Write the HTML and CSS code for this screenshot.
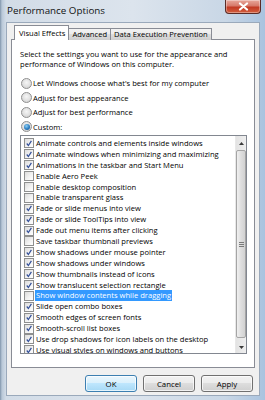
FILE: index.html
```html
<!DOCTYPE html>
<html lang="en">
<head>
    <meta charset="UTF-8">
    <title>Performance Options</title>
    <link rel="stylesheet" href="styles.css">
</head>
<body>
    <div class="window">
        <div class="titlebar">
            <span class="title">Performance Options</span>
            <button class="close-button">
                <svg width="11" height="9" viewBox="0 0 11 9"><path d="M2 1.5 L9 7.5 M9 1.5 L2 7.5" stroke="#fff" stroke-width="2.2" stroke-linecap="round"/></svg>
            </button>
        </div>

        <div class="client">
            <div class="tabs">
                <div class="tab selected">Visual Effects</div>
                <div class="tab">Advanced</div>
                <div class="tab">Data Execution Prevention</div>
            </div>

            <div class="panel">
                <p class="intro">Select the settings you want to use for the appearance and<br>performance of Windows on this computer.</p>

                <div class="radios">
                    <label class="radio"><span class="radio-dot"></span>Let Windows choose what's best for my computer</label>
                    <label class="radio"><span class="radio-dot"></span>Adjust for best appearance</label>
                    <label class="radio"><span class="radio-dot"></span>Adjust for best performance</label>
                    <label class="radio"><span class="radio-dot checked"></span>Custom:</label>
                </div>

                <div class="list">
                    <div class="items" id="items"></div>
                    <div class="scrollbar">
                        <div class="arrow">
                            <svg width="5" height="3" viewBox="0 0 5 3"><path d="M0 3 L2.5 0 L5 3 Z" fill="#3a3a3a"/></svg>
                        </div>
                        <div class="track">
                            <div class="thumb">
                                <span class="grip"></span>
                            </div>
                        </div>
                        <div class="arrow">
                            <svg width="5" height="3" viewBox="0 0 5 3"><path d="M0 0 L5 0 L2.5 3 Z" fill="#3a3a3a"/></svg>
                        </div>
                    </div>
                </div>
            </div>

            <div class="buttons">
                <button class="btn default">OK</button>
                <button class="btn">Cancel</button>
                <button class="btn">Apply</button>
            </div>
        </div>
    </div>

    <script>
        const settings = [
            ['Animate controls and elements inside windows', true],
            ['Animate windows when minimizing and maximizing', true],
            ['Animations in the taskbar and Start Menu', true],
            ['Enable Aero Peek', false],
            ['Enable desktop composition', false],
            ['Enable transparent glass', false],
            ['Fade or slide menus into view', true],
            ['Fade or slide ToolTips into view', true],
            ['Fade out menu items after clicking', true],
            ['Save taskbar thumbnail previews', false],
            ['Show shadows under mouse pointer', true],
            ['Show shadows under windows', true],
            ['Show thumbnails instead of icons', true],
            ['Show translucent selection rectangle', true],
            ['Show window contents while dragging', false, true],
            ['Slide open combo boxes', true],
            ['Smooth edges of screen fonts', true],
            ['Smooth-scroll list boxes', true],
            ['Use drop shadows for icon labels on the desktop', true],
            ['Use visual styles on windows and buttons', true]
        ];

        const check = '<svg width="9" height="9" viewBox="0 0 9 9"><path d="M2 4.5 L3.8 6.8 L7.2 1.6" fill="none" stroke="#33509a" stroke-width="1.4"/></svg>';
        const list = document.getElementById('items');

        settings.forEach(([text, checked, selected]) => {
            const row = document.createElement('div');
            row.className = 'item';
            row.innerHTML = '<span class="box">' + (checked ? check : '') + '</span>' +
                '<span class="label' + (selected ? ' selected' : '') + '">' + text + '</span>';
            list.appendChild(row);
        });
    </script>
</body>
</html>
```

FILE: styles.css
```css
* {
    margin: 0;
    padding: 0;
    box-sizing: border-box;
}
body {
    font-family: "Segoe UI", "Open Sans", sans-serif;
    font-size: 7.6px;
    color: #000;
    background: #c6d3e1;
}
.window {
    width: 265px;
    height: 400px;
    display: flex;
    flex-direction: column;
    background: linear-gradient(to right, #8095ab 0, #b9c8d8 2px, #d2dce7 6px, #dce4ed 50%, #c9d7e6 85%, #a9c3df 100%);
}
.titlebar {
    height: 22px;
    display: flex;
    justify-content: space-between;
    align-items: flex-start;
    padding-left: 7px;
    padding-right: 4px;
}
.title {
    font-size: 9.8px;
    margin-top: 4px;
    color: #111;
}
.close-button {
    width: 36px;
    height: 14px;
    border: 1px solid #5a2b26;
    border-top: none;
    border-radius: 0 0 4px 4px;
    background: linear-gradient(#e8a89c 0, #d6796a 45%, #c23a24 55%, #d2603f 100%);
    box-shadow: inset 0 0 0 1px rgba(255,255,255,0.35);
    display: flex;
    justify-content: center;
    align-items: center;
}
.client {
    flex: 1;
    margin: 0 5px 4px 6px;
    background: #f0f0f0;
    border: 1px solid #9aa9bb;
    padding: 2px 4px 0 4px;
    display: flex;
    flex-direction: column;
}
.tabs {
    display: flex;
    align-items: flex-end;
    height: 15px;
    padding-left: 3px;
    margin-bottom: -1px;
    position: relative;
    z-index: 1;
}
.tab {
    height: 12px;
    padding: 0 3px;
    line-height: 11px;
    border: 1px solid #898c95;
    border-bottom: none;
    border-left: none;
    background: linear-gradient(#f3f3f3 0, #ebebeb 50%, #dddddd 50%, #cfcfcf 100%);
    white-space: nowrap;
}
.tab.selected {
    height: 15px;
    line-height: 14px;
    padding: 0 3px 0 4px;
    background: #fff;
    border-left: 1px solid #898c95;
}
.panel {
    height: 329px;
    background: #fff;
    border: 1px solid #898c95;
    padding: 0 7px 0 8px;
    display: flex;
    flex-direction: column;
}
.intro {
    margin-top: 10px;
    line-height: 9.5px;
}
.radios {
    margin-top: 7px;
    display: flex;
    flex-direction: column;
}
.radio {
    height: 14.5px;
    display: flex;
    align-items: center;
    gap: 1px;
}
.radio-dot {
    width: 11px;
    height: 11px;
    margin-left: 1px;
    border-radius: 50%;
    border: 1px solid #8f8f8f;
    background: radial-gradient(circle at 50% 40%, #f6f6f6 0, #dedede 60%, #c8c8c8 100%);
    display: flex;
    justify-content: center;
    align-items: center;
}
.radio-dot.checked::after {
    content: "";
    width: 6px;
    height: 6px;
    border-radius: 50%;
    background: radial-gradient(circle at 40% 35%, #8fd0f5 0, #2a7cc0 55%, #1a4f88 100%);
}
.list {
    margin-top: 1px;
    height: 219px;
    border: 1px solid #828790;
    display: flex;
    overflow: hidden;
}
.items {
    flex: 1;
    padding-top: 2px;
    padding-left: 3px;
}
.item {
    height: 10.9px;
    display: flex;
    align-items: center;
    gap: 1px;
    white-space: nowrap;
}
.box {
    width: 10px;
    height: 10px;
    border: 1px solid #8e8f8f;
    background: linear-gradient(135deg, #dcdcdc 0, #f4f4f4 60%, #fff 100%);
    display: flex;
    justify-content: center;
    align-items: center;
    flex-shrink: 0;
}
.label {
    padding: 0 1px 0 1px;
    line-height: 10.9px;
}
.label.selected {
    background: #3399ff;
    color: #fff;
}
.scrollbar {
    width: 11px;
    display: flex;
    flex-direction: column;
    background: linear-gradient(to right, #e3e3e3, #efefef);
    border-left: 1px solid #e8e8e8;
    padding-top: 2px;
}
.arrow {
    height: 11px;
    display: flex;
    justify-content: center;
    align-items: center;
}
.track {
    flex: 1;
    padding: 1px 0 4px 0;
    display: flex;
}
.thumb {
    flex: 1;
    border: 1px solid #a5a5a5;
    border-radius: 2px;
    background: linear-gradient(to right, #f0f0f0, #dedede 50%, #d2d2d2);
    display: flex;
    justify-content: center;
    align-items: center;
}
.grip {
    width: 5px;
    height: 5px;
    border-top: 1px solid #7a7a7a;
    border-bottom: 1px solid #7a7a7a;
    position: relative;
}
.grip::after {
    content: "";
    position: absolute;
    left: 0;
    right: 0;
    top: 1px;
    border-top: 1px solid #7a7a7a;
}
.buttons {
    display: flex;
    justify-content: flex-end;
    gap: 6px;
    margin-top: 7px;
    padding-right: 2px;
}
.btn {
    width: 52px;
    height: 17px;
    font-family: inherit;
    font-size: 7.8px;
    color: #000;
    border: 1px solid #707070;
    border-radius: 3px;
    background: linear-gradient(#f2f2f2 0, #ebebeb 50%, #dddddd 50%, #cfcfcf 100%);
    box-shadow: inset 0 0 0 1px rgba(255,255,255,0.7);
}
.btn.default {
    border-color: #3c7fb1;
    background: linear-gradient(#eaf6fd 0, #d9f0fc 50%, #bee6fd 50%, #a7d9f5 100%);
}
```
